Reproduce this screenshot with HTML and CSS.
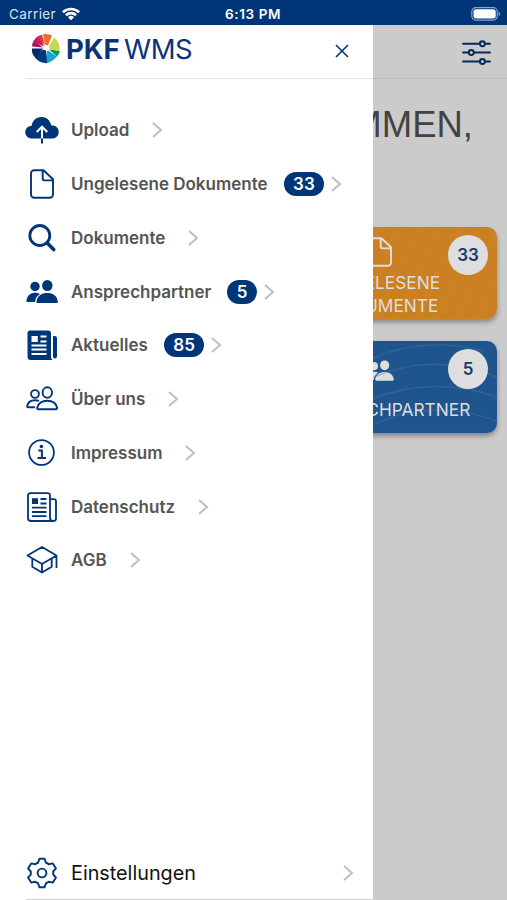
FILE: index.html
```html
<!DOCTYPE html>
<html lang="de">
<head>
<meta charset="utf-8">
<title>PKF WMS</title>
<link rel="stylesheet" href="styles.css">
</head>
<body>
<svg class="defs" aria-hidden="true">
  <symbol id="chevron" viewBox="0 0 12 18"><path d="M2 2l8 7-8 7" fill="none" stroke="currentColor" stroke-width="1.9"/></symbol>
  <symbol id="file" viewBox="0 0 32 32"><path d="M8.200 2.200h9.300l9.500 9v15.300a3.200 3.200 0 0 1-3.200 3.200H8.200a3.200 3.200 0 0 1-3.200-3.200V5.400a3.200 3.200 0 0 1 3.200-3.200zM16.700 2.500v7.900a2 2 0 0 0 2 2h8" fill="none" stroke="currentColor" stroke-width="1.900" stroke-linejoin="round"/></symbol>
  <symbol id="people" viewBox="0 0 32 32"><g fill="currentColor"><circle cx="9" cy="10.500" r="4.700"/><path d="M1.200 26c-.7 0-.9-.8-.7-1.800C1.500 19 5 16.800 9 16.800c2 0 3.700.4 5 1.200-3 1.700-4.700 4.400-4.900 8z"/><ellipse cx="21.300" cy="9.500" rx="5.200" ry="5.600"/><path d="M11.800 27c-1 0-1.500-.8-1.300-1.800C11.500 19.500 16 17 21.300 17s9.600 2.500 10.500 8.200c.2 1-.3 1.800-1.300 1.800z"/></g></symbol>
</svg>
<div class="statusbar">
  <span class="carrier">Carrier</span>
  <svg class="wifi" viewBox="0 0 18 14"><path fill="#fff" d="M0 4.300a13 13 0 0 1 18 0L16.200 6.200a10.400 10.400 0 0 0-14.400 0zM3 7.300a8.600 8.600 0 0 1 12 0l-1.900 1.900a6 6 0 0 0-8.200 0zM6 10.300a4.300 4.300 0 0 1 6 0L9 13.300z"/></svg>
  <span class="time">6:13 PM</span>
  <svg class="battery" viewBox="0 0 31 14"><rect x=".8" y=".7" width="25.500" height="12.400" rx="4" fill="none" stroke="#8da5c9" stroke-width="1.200"/><rect x="2.500" y="2.300" width="22.200" height="9.200" rx="2.500" fill="#fff"/><path d="M27.800 4.600q3 2.300 0 4.600z" fill="#8da5c9"/></svg>
</div>
<div class="stage">
  <main class="home">
    <header class="home-bar">
      <svg class="sliders" viewBox="0 0 28 26" fill="none" stroke="#06295c" stroke-width="1.900" stroke-linecap="round"><path d="M1 4.600h16M23 4.600h4M1 13h5.500M12 13h15M1 21.700h16M23 21.700h4"/><circle cx="19.700" cy="4.600" r="2.400"/><circle cx="9" cy="13" r="2.400"/><circle cx="19.700" cy="21.700" r="2.400"/></svg>
    </header>
    <h1>WILLKOMMEN,</h1>
    <section class="tiles">
      <article class="tile orange">
        <svg class="tile-icon"><use href="#file"/></svg>
        <p>UNGELESENE<br>DOKUMENTE</p>
        <b class="count">33</b>
      </article>
      <article class="tile blue">
        <svg class="waves" viewBox="0 0 125 92" fill="none" stroke="#4675a6" stroke-width="1.500" opacity=".4"><path d="M0 18Q50-5 112 10M0 37Q60 10 125 36M0 58Q60 34 125 56M0 84Q60 56 125 80"/></svg>
        <svg class="tile-icon"><use href="#people"/></svg>
        <p>ANSPRECHPARTNER</p>
        <b class="count">5</b>
      </article>
    </section>
  </main>
  <aside class="drawer">
    <header class="brand">
      <svg class="logo" viewBox="-15 -15 30 30"><path fill="#f36b21" d="M-1-4L-3-14.500Q3-15 6-13L2-3z"/><path fill="#c3d94e" d="M3-2L8-11Q15-5 13.500 2L4 1z"/><path fill="#079a52" d="M3 1L14 2.500Q13 6 11 8z"/><path fill="#16a5d2" d="M2 2L11 8Q6 14-1 15L1 3z"/><path fill="#06377a" d="M0 2L1 14.500Q-7 14.500-11 9L-3 1z"/><path fill="#052a65" d="M-3 0L-10 10Q-15 5-14 0z"/><path fill="#a3195b" d="M-3-1L-14-2Q-14-5-12-8z"/><path fill="#c91f60" d="M-2-2L-13-7Q-9-13-6-13z"/><path fill="#e4334b" d="M-1-3L-8-12-4-14z"/></svg>
      <span class="wordmark"><b>PKF</b> <span>WMS</span></span>
      <svg class="close" viewBox="0 0 14 14"><path d="M1 1l12 12M13 1L1 13" stroke="#003678" stroke-width="1.600"/></svg>
    </header>
    <nav class="menu">
      <a class="item upload">
        <svg class="icon wide" viewBox="0 0 34 32"><path fill="currentColor" d="M7.500 24.500C3 24.500.3 21.800.3 18.200c0-3.500 2.500-6 6.300-6.400C7.700 6.300 11.600 3 16.500 3c4.800 0 8.800 3.300 9.700 8.300 4.600.1 7.500 2.700 7.500 6.600 0 4-2.900 6.600-7 6.600z"/><path d="M17 25V13M11.700 18L17 12.700 22.300 18" fill="none" stroke="#fff" stroke-width="2"/><path d="M17 24.500v5" stroke="currentColor" stroke-width="2"/></svg>
        <span class="label">Upload</span><svg class="chev"><use href="#chevron"/></svg>
      </a>
      <a class="item">
        <svg class="icon"><use href="#file"/></svg>
        <span class="label">Ungelesene Dokumente</span><b class="badge">33</b><svg class="chev"><use href="#chevron"/></svg>
      </a>
      <a class="item">
        <svg class="icon" viewBox="0 0 32 32" fill="none" stroke="currentColor"><circle cx="13.800" cy="13.500" r="10" stroke-width="2.800"/><path d="M21 20.800l6.700 6.800" stroke-width="3.600" stroke-linecap="round"/></svg>
        <span class="label">Dokumente</span><svg class="chev"><use href="#chevron"/></svg>
      </a>
      <a class="item">
        <svg class="icon"><use href="#people"/></svg>
        <span class="label">Ansprechpartner</span><b class="badge">5</b><svg class="chev"><use href="#chevron"/></svg>
      </a>
      <a class="item">
        <svg class="icon" viewBox="0 0 32 32"><path fill="currentColor" d="M4 1.500h18A3 3 0 0 1 25 4.500V28q0 1.500 1.300 3H5Q1.500 31 1.500 27.500V4A2.500 2.500 0 0 1 4 1.500z"/><path fill="currentColor" d="M27 7h1.500q2.500 0 2.500 2.500V27q0 2.500-2 2.500t-2-2.500z"/><path fill="#fff" d="M5.500 7h6.300v6H5.500z"/><path d="M14.500 7.500h6M14.500 12.500h6M5.500 16.500h15M5.500 20.500h15M5.500 25h15" stroke="#fff" stroke-width="1.800"/></svg>
        <span class="label">Aktuelles</span><b class="badge">85</b><svg class="chev"><use href="#chevron"/></svg>
      </a>
      <a class="item">
        <svg class="icon" viewBox="0 0 32 32" fill="none" stroke="currentColor" stroke-width="1.900"><circle cx="9" cy="11" r="3.900"/><ellipse cx="21.300" cy="9.500" rx="4.700" ry="5.200"/><path d="M13 17.900c-1.200-.4-2.600-.6-4-.6-4.200 0-7 2-7.800 5.500-.2.900.2 1.400 1 1.400H9M12.300 26.200c-1 0-1.300-.8-1-1.600C12.400 20 16.500 17.800 21.300 17.800S30 20 31 24.600c.2.800-.2 1.600-1.200 1.600z"/></svg>
        <span class="label">Über uns</span><svg class="chev"><use href="#chevron"/></svg>
      </a>
      <a class="item">
        <svg class="icon" viewBox="0 0 32 32" fill="none" stroke="currentColor"><circle cx="15.500" cy="15.500" r="12.400" stroke-width="1.800"/><path d="M12.300 13.500h3.600v7.300M11.500 21h8.500" stroke-width="2"/><circle cx="15.400" cy="9.500" r="1.800" fill="currentColor" stroke="none"/></svg>
        <span class="label">Impressum</span><svg class="chev"><use href="#chevron"/></svg>
      </a>
      <a class="item">
        <svg class="icon" viewBox="0 0 32 32" fill="none" stroke="currentColor" stroke-width="1.800"><path d="M24 8.200V4.500a2.300 2.300 0 0 0-2.300-2.300H4.300A2.300 2.300 0 0 0 2 4.500V27q0 3 3 3h22.500q2.500 0 2.500-2.500V10.500q0-2.300-2.300-2.300H24V27q0 3 3 3"/><path d="M14.500 8h6M14.500 12.500h6M6 16.700h14.500M6 21h14.500M6 25.200h14.500"/><path d="M6 7.200h6V13H6z" fill="currentColor" stroke="none"/></svg>
        <span class="label">Datenschutz</span><svg class="chev"><use href="#chevron"/></svg>
      </a>
      <a class="item">
        <svg class="icon" viewBox="0 0 32 32" fill="none" stroke="currentColor" stroke-width="1.800" stroke-linejoin="round"><path d="M1.500 11.500L16 3l14.500 8.500L16 20zM6.300 14.500v8.200L16 28.500l9.700-5.800v-8.200M16 20v8.500M30.500 11.500V24"/></svg>
        <span class="label">AGB</span><svg class="chev"><use href="#chevron"/></svg>
      </a>
    </nav>
    <a class="settings">
      <svg class="icon" viewBox="-16 -16 32 32" fill="none" stroke="currentColor" stroke-width="1.900" stroke-linejoin="round"><path d="M-2.500-14.300H2.500L4-10.200Q5.300-9.900 6.700-8.800L10.800-9.600 14-4.600 11.200-1.500V1.500L14 4.600 10.800 9.600 6.700 8.800Q5.300 9.900 4 10.200L2.500 14.300H-2.500L-4 10.200Q-5.300 9.900-6.700 8.800L-10.800 9.600-14 4.600-11.200 1.500V-1.500L-14-4.600-10.800-9.600-6.700-8.800Q-5.300-9.900-4-10.200z"/><circle r="4.400"/></svg>
      <span class="settings-label">Einstellungen</span><svg class="chev"><use href="#chevron"/></svg>
    </a>
  </aside>
</div>
</body>
</html>
```

FILE: styles.css
```css
* { box-sizing: border-box; }
body { margin: 0; height: 900px; overflow: hidden; display: flex; flex-direction: column; font-family: Inter, "Liberation Sans", sans-serif; background: #cbcbcb; }
.defs { position: absolute; width: 0; height: 0; }
.statusbar { height: 25px; flex: none; background: #003678; display: grid; grid-template-columns: 53px 163px 1fr 31px; align-items: center; padding: 2px 5px 0 9px; color: #fff; font-size: 13.5px; }
.carrier { color: #d7e1ee; letter-spacing: .4px; }
.wifi { width: 18px; height: 14px; }
.time { font-weight: 600; font-size: 13.5px; letter-spacing: .6px; }
.battery { width: 31px; height: 14px; }
.stage { position: relative; flex: 1; min-height: 0; }

.home-bar { height: 54px; border-bottom: 1px solid #b9b9b9; display: flex; justify-content: flex-end; align-items: center; padding: 1px 16px 0 0; }
.sliders { width: 29px; height: 27px; }
h1 { margin: 25px 0 0; font: 400 36.5px/42px "Liberation Sans", sans-serif; color: #424242; text-align: right; padding-right: 34px; white-space: nowrap; }
.tiles { display: flex; flex-direction: column; align-items: flex-end; gap: 22px; padding: 81px 10px 0 0; }
.tile { position: relative; width: 230px; height: 92px; border-radius: 10px; box-shadow: 0 3px 5px rgba(0,0,0,.35); color: #dedede; display: flex; flex-direction: column; align-items: center; overflow: hidden; }
.orange { background: repeating-linear-gradient(115deg, #ca8022 0 7px, #cc8223 11px 14px, #ca8022 18px); }
.blue { background: #20558f; }
.tile-icon { width: 32px; height: 32px; margin: 9px 4px 0 0; flex: none; }
.tile p { margin: 3px 0 0; font-size: 17.3px; line-height: 23px; text-align: center; position: relative; left: 1px; }
.blue .tile-icon { width: 28px; height: 28px; margin: 16px 4px 0 0; }
.blue p { margin-top: 13px; left: 2px; }
.count { position: absolute; right: 9px; top: 8px; width: 40px; height: 40px; border-radius: 50%; background: #dedede; color: #17396b; display: grid; place-items: center; font-size: 17px; font-weight: 600; }
.waves { position: absolute; right: 0; top: 0; width: 125px; height: 92px; }

.drawer { position: absolute; left: 0; top: 0; width: 373px; height: 875px; background: #fff; display: flex; flex-direction: column; padding-left: 26px; color: #003678; }
.brand { height: 54px; flex: none; border-bottom: 1px solid #e4e4e4; display: flex; align-items: flex-start; padding: 8px 24px 0 5px; }
.logo { width: 30px; height: 31px; }
.wordmark { margin: 0 auto 0 5px; font-size: 27.5px; line-height: 32px; letter-spacing: -.1px; color: #0c3277; white-space: nowrap; }
.wordmark b { font-weight: 700; }
.wordmark span { font-weight: 400; margin-left: -3px; letter-spacing: -.5px; }
.close { width: 14px; height: 14px; margin-top: 11px; }
.menu { padding-top: 24.5px; flex: 1; }
.item { height: 53.75px; display: flex; align-items: center; }
.icon { width: 32px; height: 32px; flex: none; }
.wide { width: 34px; margin-right: -2px; margin-left: -1px; }
.upload .label { margin-left: 14px; }
.label { margin-left: 13px; font-size: 17px; font-weight: 600; color: #555; white-space: nowrap; }
.chev { width: 12px; height: 18px; color: #bdbdbd; margin-left: 22px; flex: none; }
.badge { margin-left: 16px; height: 24px; border-radius: 12px; padding: 0 9.5px; background: #003678; color: #fff; font-size: 17px; line-height: 24px; font-weight: 600; }
.badge + .chev { margin-left: 6px; }
.settings { height: 54px; border-bottom: 1px solid #d0d0d0; display: flex; align-items: center; padding-right: 19px; }
.settings-label { margin-left: 13px; font-size: 19.8px; color: #111; }
.settings .chev { margin-left: auto; }
```
